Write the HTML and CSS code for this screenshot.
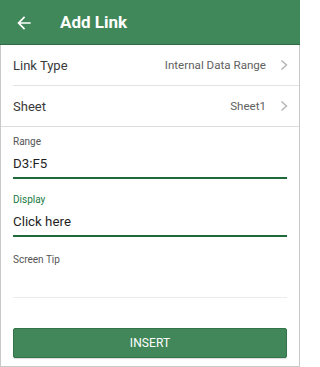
FILE: index.html
```html
<!DOCTYPE html>
<html>
<head>
<meta charset="utf-8">
<link rel="stylesheet" href="styles.css">
</head>
<body>
<div class="app">
  <header class="bar">
    <svg class="back" viewBox="0 0 24 24" width="20" height="20"><path d="M20 11H7.83l5.59-5.59L12 4l-8 8 8 8 1.41-1.41L7.83 13H20v-2z" fill="#fff"/></svg>
    <h1 class="title">Add Link</h1>
  </header>
  <main class="content">
    <div class="row">
      <div class="row-inner">
        <span class="row-label">Link Type</span>
        <span class="row-value">Internal Data Range</span>
        <svg class="chev" viewBox="0 0 8 12" width="8" height="12"><path d="M1.5 1.5 6.5 6 1.5 10.5" fill="none" stroke="#b3b3b3" stroke-width="1.4"/></svg>
      </div>
    </div>
    <div class="row row-full">
      <div class="row-inner">
        <span class="row-label">Sheet</span>
        <span class="row-value">Sheet1</span>
        <svg class="chev" viewBox="0 0 8 12" width="8" height="12"><path d="M1.5 1.5 6.5 6 1.5 10.5" fill="none" stroke="#b3b3b3" stroke-width="1.4"/></svg>
      </div>
    </div>
    <div class="form">
      <div class="field field-first">
        <div class="field-label">Range</div>
        <div class="field-input field-set">D3:F5</div>
      </div>
      <div class="field">
        <div class="field-label field-label-focus">Display</div>
        <div class="field-input field-set">Click here</div>
      </div>
      <div class="field field-last">
        <div class="field-label">Screen Tip</div>
        <div class="field-input field-empty"></div>
      </div>
      <button class="insert">INSERT</button>
    </div>
  </main>
</div>
</body>
</html>
```

FILE: styles.css
```css
* { box-sizing: border-box; }
html, body { margin: 0; padding: 0; background: #fff; }
body { font-family: Roboto, "Noto Sans", sans-serif; }

.app {
  width: 300px;
  height: 367px;
  display: flex;
  flex-direction: column;
}

.bar {
  height: 45px;
  flex: none;
  background: #40875a;
  border-bottom: 1px solid #2f6c46;
  display: flex;
  align-items: center;
  padding-left: 14px;
}
.back { display: block; margin-top: 1px; }
.title {
  margin: 0 0 0 26px;
  color: #fff;
  font-size: 17px;
  font-weight: 700;
  line-height: 20px;
}

.content {
  flex: 1;
  border: 1px solid #c9c9c9;
  border-top: none;
  display: flex;
  flex-direction: column;
}

.row { padding-left: 12px; }
.row-inner {
  height: 41px;
  border-bottom: 1px solid #e3e3e3;
  display: flex;
  align-items: center;
  padding-right: 11px;
}
.row-full { border-bottom: 1px solid #dcdcdc; }
.row-full .row-inner { border-bottom: none; height: 40px; }
.row-label {
  flex: 1;
  font-size: 13px;
  color: #3a3a3a;
}
.row-value {
  font-size: 11.6px;
  color: #616161;
  margin-right: 14px;
}
.chev { display: block; }

.form {
  flex: 1;
  padding: 0 12px 8px;
  display: flex;
  flex-direction: column;
}
.field { margin-top: 14px; }
.field-first { margin-top: 8px; }
.field-last { margin-top: 16px; }
.field-label {
  font-size: 10px;
  line-height: 14px;
  color: #555;
}
.field-label-focus { color: #217a42; }
.field-input {
  margin-top: 5px;
  line-height: 20px;
  padding-bottom: 4px;
  font-size: 13.3px;
  color: #1f1f1f;
}
.field-set { border-bottom: 2px solid #1f6a39; height: 25px; }
.field-empty { border-bottom: 1px solid #ececec; height: 26px; }

.insert {
  margin-top: auto;
  height: 30px;
  width: 100%;
  background: #41875a;
  border: 1px solid #357349;
  border-radius: 2px;
  box-shadow: 0 1px 1px rgba(0,0,0,0.15);
  color: #fff;
  font-family: Roboto, "Noto Sans", sans-serif;
  font-size: 12px;
  letter-spacing: 0.1px;
  padding: 0;
}
```
